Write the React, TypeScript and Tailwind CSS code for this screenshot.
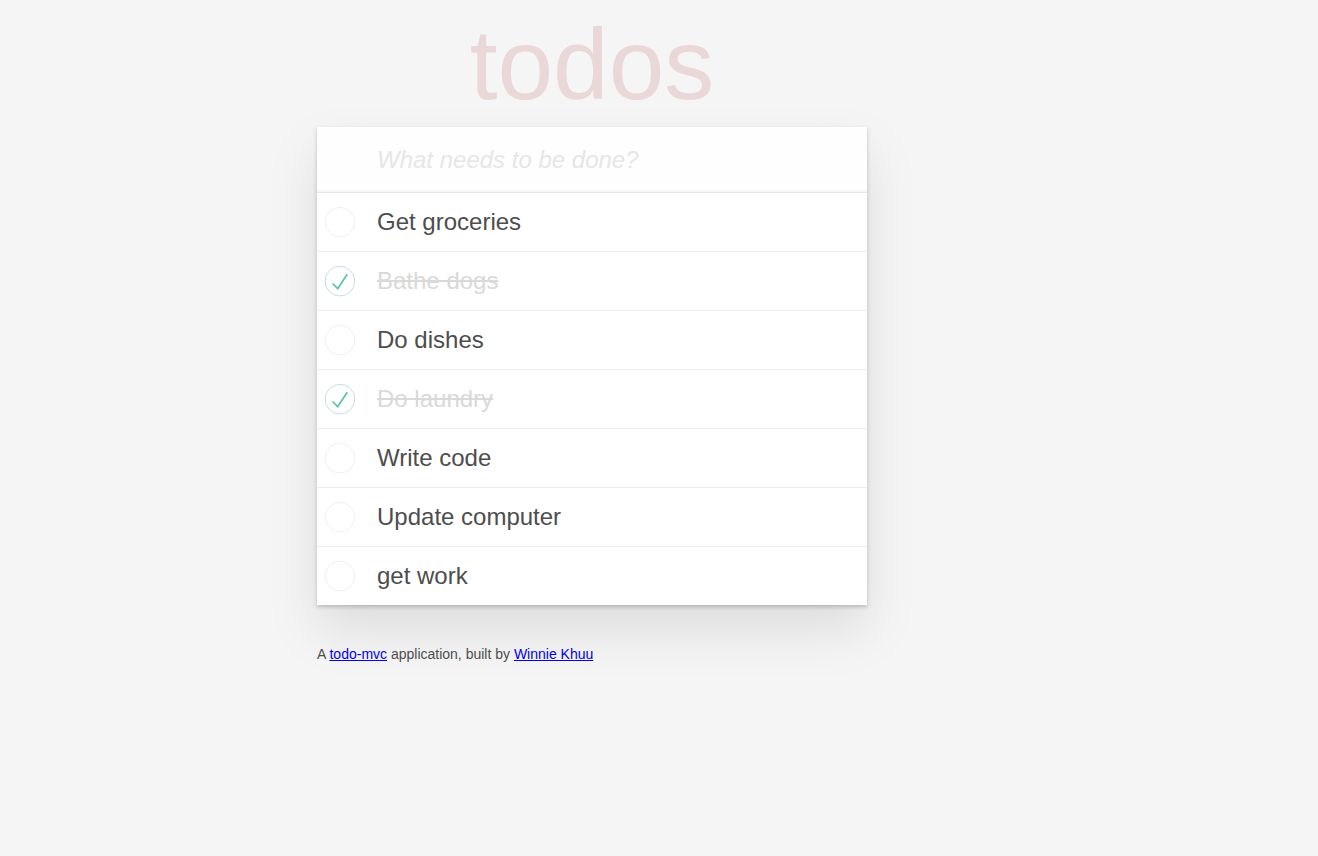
const todos = [
  { text: "Get groceries", done: false },
  { text: "Bathe dogs", done: true },
  { text: "Do dishes", done: false },
  { text: "Do laundry", done: true },
  { text: "Write code", done: false },
  { text: "Update computer", done: false },
  { text: "get work", done: false },
];

const Toggle = ({ done }: { done: boolean }) => (
  <svg width="40" height="40" viewBox="-10 -18 100 135" className="shrink-0">
    <circle cx="50" cy="50" r="50" fill="none" stroke={done ? "#bddad5" : "#ededed"} strokeWidth="3" />
    {done && <path fill="#5dc2af" d="M72 25L42 71 27 56l-4 4 20 20 34-52z" />}
  </svg>
);

const App = () => {
  return (
    <div className="min-h-screen bg-[#f5f5f5] pl-[317px] pt-[14px] text-[#4d4d4d] font-['Liberation_Sans',Arial,sans-serif]">
      <div className="w-[550px]">
        {/* Title */}
        <h1 className="text-center text-[100px] leading-none font-thin text-[rgba(175,47,47,0.15)]">todos</h1>

        {/* Card */}
        <section className="mt-[13px] bg-white shadow-[0_2px_4px_0_rgba(0,0,0,0.2),0_25px_50px_0_rgba(0,0,0,0.1)]">
          <input
            className="block w-full py-4 pl-[60px] pr-4 text-[24px] leading-[33px] bg-[rgba(0,0,0,0.003)] shadow-[inset_0_-2px_1px_rgba(0,0,0,0.03)] outline-none placeholder:italic placeholder:text-[#e6e6e6]"
            placeholder="What needs to be done?"
          />
          <ul className="border-t border-[#e6e6e6]">
            {todos.map((t, i) => (
              <li key={i} className="flex items-center border-b border-[#ededed] last:border-b-0">
                <Toggle done={t.done} />
                <label
                  className={`ml-5 py-[15px] pr-[15px] text-[24px] leading-[28px] ${t.done ? "text-[#d9d9d9] line-through" : ""}`}
                >
                  {t.text}
                </label>
              </li>
            ))}
          </ul>
        </section>

        {/* Footer */}
        <p className="mt-10 text-[14px] leading-[1.4]">
          A <a href="#" className="text-[#0000ee] underline">todo-mvc</a> application, built by{" "}
          <a href="#" className="text-[#0000ee] underline">Winnie Khuu</a>
        </p>
      </div>
    </div>
  );
};

export default App;
